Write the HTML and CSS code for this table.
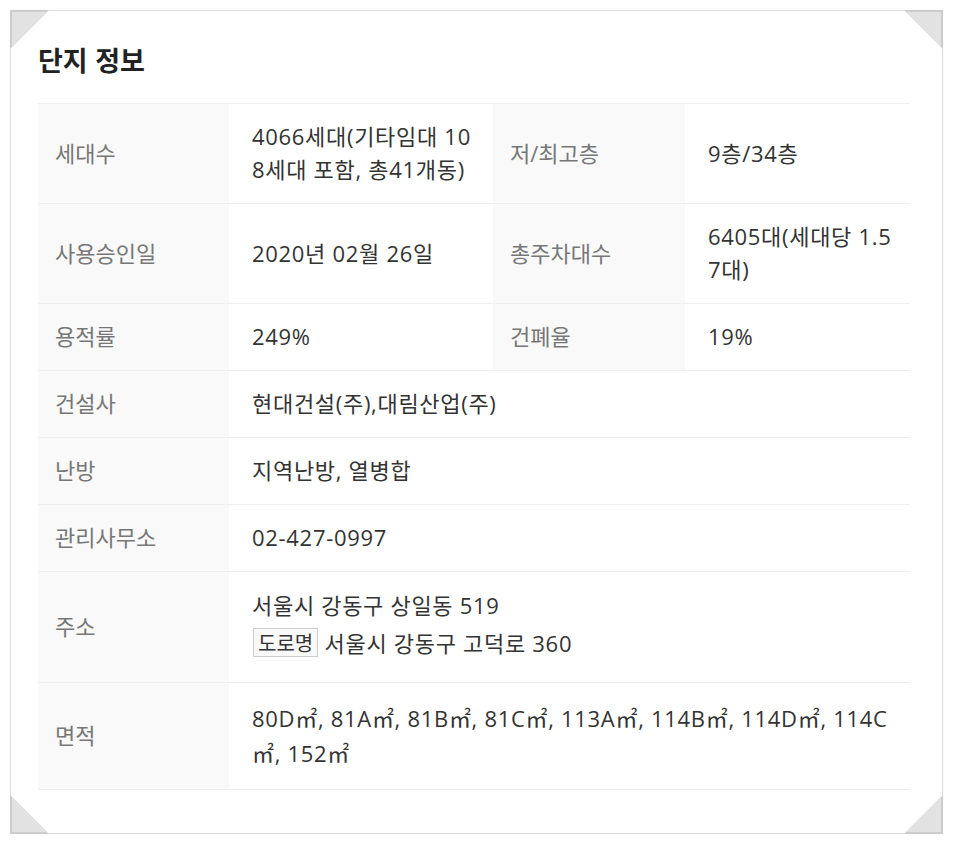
FILE: index.html
```html
<!DOCTYPE html>
<html lang="ko">
<head>
  <meta charset="UTF-8">
  <meta name="viewport" content="width=device-width, initial-scale=1.0">
  <title>단지 정보</title>
  <link rel="stylesheet" href="styles.css">
</head>
<body>
  <div class="panel">
    <span class="corner tl"></span>
    <span class="corner tr"></span>
    <span class="corner bl"></span>
    <span class="corner br"></span>

    <h2 class="title">단지 정보</h2>

    <table class="info">
      <colgroup>
        <col class="c-label">
        <col class="c-value">
        <col class="c-label2">
        <col class="c-value2">
      </colgroup>
      <tr>
        <th>세대수</th>
        <td>4066세대(기타임대 108세대 포함, 총41개동)</td>
        <th>저/최고층</th>
        <td>9층/34층</td>
      </tr>
      <tr>
        <th>사용승인일</th>
        <td>2020년 02월 26일</td>
        <th>총주차대수</th>
        <td>6405대(세대당 1.57대)</td>
      </tr>
      <tr>
        <th>용적률</th>
        <td>249%</td>
        <th>건폐율</th>
        <td>19%</td>
      </tr>
      <tr>
        <th>건설사</th>
        <td colspan="3">현대건설(주),대림산업(주)</td>
      </tr>
      <tr>
        <th>난방</th>
        <td colspan="3">지역난방, 열병합</td>
      </tr>
      <tr>
        <th>관리사무소</th>
        <td colspan="3">02-427-0997</td>
      </tr>
      <tr class="addr">
        <th>주소</th>
        <td colspan="3">
          <div>서울시 강동구 상일동 519</div>
          <div class="road"><span class="tag">도로명</span> 서울시 강동구 고덕로 360</div>
        </td>
      </tr>
      <tr class="area">
        <th>면적</th>
        <td colspan="3">80D㎡, 81A㎡, 81B㎡, 81C㎡, 113A㎡, 114B㎡, 114D㎡, 114C㎡, 152㎡</td>
      </tr>
    </table>
  </div>
</body>
</html>
```

FILE: styles.css
```css
body {
  margin: 0;
  background: #fff;
  font-family: "Open Sans", "Noto Sans CJK KR", sans-serif;
  color: #333;
}

.panel {
  position: relative;
  width: 933px;
  height: 824px;
  margin: 10px;
  box-sizing: border-box;
  padding: 30px 0 0 27px;
  background: #fff;
  border: 1px solid #ddd;
  box-shadow: 0 0 2px rgba(0,0,0,0.06);
}

.corner {
  position: absolute;
  width: 39px;
  height: 39px;
  background: #ccc;
}
.corner::after {
  content: "";
  position: absolute;
  inset: 0;
  background: #e2e2e2;
}
.corner.tl { top: -1px; left: -1px; clip-path: polygon(0 0, 100% 0, 0 100%); }
.corner.tl::after { inset: 2px 0 0 2px; clip-path: polygon(0 0, 100% 0, 0 100%); }
.corner.tr { top: -1px; right: -1px; clip-path: polygon(0 0, 100% 0, 100% 100%); }
.corner.tr::after { inset: 2px 2px 0 0; clip-path: polygon(0 0, 100% 0, 100% 100%); }
.corner.bl { bottom: -1px; left: -1px; clip-path: polygon(0 0, 100% 100%, 0 100%); }
.corner.bl::after { inset: 0 0 2px 2px; clip-path: polygon(0 0, 100% 100%, 0 100%); }
.corner.br { bottom: -1px; right: -1px; clip-path: polygon(100% 0, 100% 100%, 0 100%); }
.corner.br::after { inset: 0 2px 2px 0; clip-path: polygon(100% 0, 100% 100%, 0 100%); }

.title {
  margin: 0 0 24px;
  font-family: "Noto Sans CJK KR", sans-serif;
  font-size: 27px;
  line-height: 38px;
  font-weight: bold;
  color: #222;
}

.info {
  width: 872px;
  border-collapse: collapse;
  table-layout: fixed;
  font-size: 22px;
  line-height: 33px;
}
.c-label { width: 191px; }
.c-value { width: 264px; }
.c-label2 { width: 192px; }
.c-value2 { width: 225px; }

.info th,
.info td {
  border-top: 1px solid #eee;
  border-bottom: 1px solid #eee;
  padding: 16px 16px 17px 23px;
  text-align: left;
  vertical-align: middle;
  word-break: break-all;
}
.info th {
  background: #f9f9f9;
  color: #777;
  font-weight: normal;
  padding-left: 17px;
}
.info td {
  color: #333;
  letter-spacing: 0.7px;
}

.addr td {
  line-height: 38px;
  padding-top: 14px;
  padding-bottom: 20px;
}
.tag {
  display: inline-block;
  border: 1px solid #ccc;
  background: #f9f9f9;
  font-family: "Noto Sans CJK KR", sans-serif;
  font-size: 20px;
  line-height: 27px;
  padding: 0 4px;
  margin-left: 1px;
  letter-spacing: 0;
  vertical-align: 1px;
}

.area td {
  line-height: 35px;
  padding-top: 18px;
  padding-bottom: 18px;
  padding-right: 8px;
}
```
